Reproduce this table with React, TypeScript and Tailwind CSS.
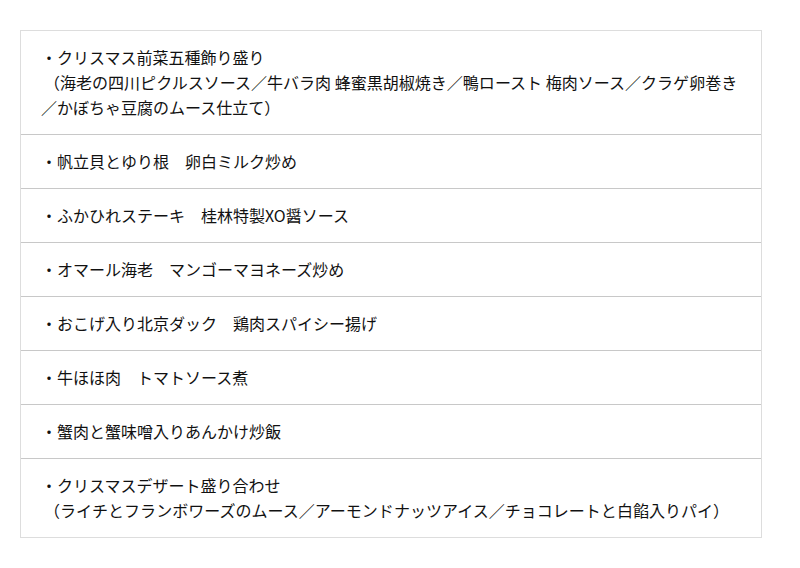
const menu: string[][] = [
  [
    "・クリスマス前菜五種飾り盛り",
    "（海老の四川ピクルスソース／牛バラ肉 蜂蜜黒胡椒焼き／鴨ロースト 梅肉ソース／クラゲ卵巻き",
    "／かぼちゃ豆腐のムース仕立て）",
  ],
  ["・帆立貝とゆり根　卵白ミルク炒め"],
  ["・ふかひれステーキ　桂林特製XO醤ソース"],
  ["・オマール海老　マンゴーマヨネーズ炒め"],
  ["・おこげ入り北京ダック　鶏肉スパイシー揚げ"],
  ["・牛ほほ肉　トマトソース煮"],
  ["・蟹肉と蟹味噌入りあんかけ炒飯"],
  [
    "・クリスマスデザート盛り合わせ",
    "（ライチとフランボワーズのムース／アーモンドナッツアイス／チョコレートと白餡入りパイ）",
  ],
];

export default function App() {
  return (
    <div className="min-h-[568px] w-[800px] bg-white pt-[30px] pl-[20px]">
      <div className="w-[742px] border border-[#dddddd] font-['Noto_Sans_CJK_JP',sans-serif] text-[16px] leading-[25px] text-[#111111]">
        {menu.map((lines, i) => (
          <div
            key={i}
            className={
              "py-[14px] pl-[20px] pr-[6px] " +
              (i > 0 ? "border-t border-[#c8c8c8]" : "")
            }
          >
            {lines.map((line, j) => (
              <div
                key={j}
                className={
                  line.startsWith("（")
                    ? "whitespace-nowrap pl-[3px] tracking-[0.02px]"
                    : "whitespace-nowrap"
                }
              >
                {line}
              </div>
            ))}
          </div>
        ))}
      </div>
    </div>
  );
}
